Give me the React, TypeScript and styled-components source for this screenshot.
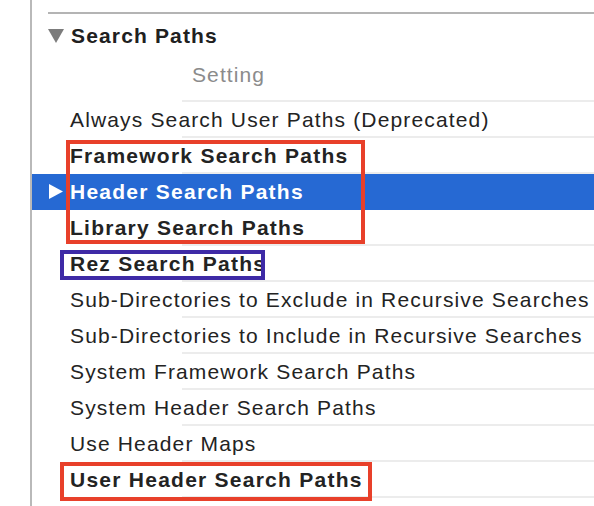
import styled, { createGlobalStyle } from 'styled-components';

const GlobalStyle = createGlobalStyle`
  html, body {
    margin: 0;
    padding: 0;
    background: #ffffff;
  }
  body {
    font-family: 'Liberation Sans', Arial, sans-serif;
    color: #232323;
  }
`;

interface Setting {
  name: string;
  bold?: boolean;
  selected?: boolean;
}

const settings: Setting[] = [
  { name: 'Always Search User Paths (Deprecated)' },
  { name: 'Framework Search Paths', bold: true },
  { name: 'Header Search Paths', bold: true, selected: true },
  { name: 'Library Search Paths', bold: true },
  { name: 'Rez Search Paths', bold: true },
  { name: 'Sub-Directories to Exclude in Recursive Searches' },
  { name: 'Sub-Directories to Include in Recursive Searches' },
  { name: 'System Framework Search Paths' },
  { name: 'System Header Search Paths' },
  { name: 'Use Header Maps' },
  { name: 'User Header Search Paths', bold: true },
];

const ROW = 36;

// annotation boxes drawn over the list, by row index
const marks = [
  { first: 1, rows: 3, left: 34, width: 299, dy: 2, extra: -2, color: '#e8402a' },
  { first: 4, rows: 1, left: 28, width: 205, dy: 4, extra: -2, color: '#3e2aa6' },
  { first: 10, rows: 1, left: 28, width: 312, dy: 0, extra: 3, color: '#e8402a' },
];

export default function App() {
  return (
    <>
      <GlobalStyle />
      <Frame>
        <Gutter />
        <Panel>
          <TopRule />
          <SectionHeader>
            <Disclosure viewBox="0 0 16 14">
              <path d="M0 0 H16 L8 14 Z" fill="#7c7c7c" />
            </Disclosure>
            <SectionTitle>Search Paths</SectionTitle>
          </SectionHeader>
          <ColumnHeader>
            <ColumnLabel>Setting</ColumnLabel>
          </ColumnHeader>
          <List>
            {settings.map((s) => (
              <Row key={s.name} selected={s.selected}>
                {s.selected && (
                  <RowArrow viewBox="0 0 14 15">
                    <path d="M0 0 L14 7.5 L0 15 Z" fill="#ffffff" />
                  </RowArrow>
                )}
                <RowName bold={s.bold} selected={s.selected}>
                  {s.name}
                </RowName>
              </Row>
            ))}
            {marks.map((m, i) => (
              <Mark
                key={i}
                color={m.color}
                style={{
                  top: m.first * ROW + m.dy,
                  left: m.left,
                  width: m.width,
                  height: m.rows * ROW - m.dy + m.extra,
                }}
              />
            ))}
          </List>
        </Panel>
      </Frame>
    </>
  );
}

const Frame = styled.div`
  display: flex;
  width: 594px;
  height: 506px;
  overflow: hidden;
`;

const Gutter = styled.div`
  width: 30px;
  flex-shrink: 0;
`;

const Panel = styled.div`
  flex: 1;
  border-left: 2px solid #b9b9b9;
  padding-top: 12px;
  display: flex;
  flex-direction: column;
`;

const TopRule = styled.div`
  height: 2px;
  margin-left: 16px;
  background: #b4b4b4;
`;

const SectionHeader = styled.div`
  height: 44px;
  display: flex;
  align-items: center;
  padding-left: 16px;
  gap: 7px;
`;

const Disclosure = styled.svg`
  width: 16px;
  height: 14px;
`;

const SectionTitle = styled.span`
  font-size: 21px;
  font-weight: bold;
  letter-spacing: 1.15px;
  color: #202020;
`;

const ColumnHeader = styled.div`
  height: 34px;
  padding-bottom: 8px;
  margin-left: 150px;
  border-bottom: 2px solid #ececec;
  display: flex;
  align-items: center;
`;

const ColumnLabel = styled.span`
  padding-left: 10px;
  font-size: 21px;
  letter-spacing: 1.1px;
  color: #8b8b8b;
`;

const List = styled.div`
  position: relative;
  display: flex;
  flex-direction: column;
`;

const Row = styled.div<{ selected?: boolean }>`
  position: relative;
  height: 36px;
  display: flex;
  align-items: center;
  padding-left: 38px;
  background: ${({ selected }) => (selected ? '#2669d3' : 'transparent')};

  &::after {
    content: '';
    position: absolute;
    left: 150px;
    right: 0;
    bottom: 0;
    height: 2px;
    background: ${({ selected }) => (selected ? 'transparent' : '#ececec')};
  }
`;

const RowArrow = styled.svg`
  position: absolute;
  left: 17px;
  top: 10px;
  width: 14px;
  height: 15px;
`;

const RowName = styled.span<{ bold?: boolean; selected?: boolean }>`
  font-size: 21px;
  white-space: nowrap;
  font-weight: ${({ bold }) => (bold ? 'bold' : 'normal')};
  letter-spacing: ${({ bold }) => (bold ? '1.25px' : '1.15px')};
  color: ${({ selected }) => (selected ? '#ffffff' : '#232323')};
`;

const Mark = styled.div<{ color: string }>`
  position: absolute;
  box-sizing: border-box;
  border: 4px solid ${({ color }) => color};
  pointer-events: none;
`;
